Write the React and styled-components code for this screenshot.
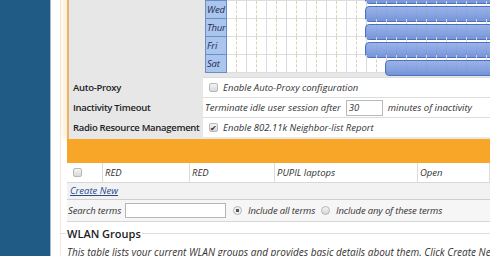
import styled, { createGlobalStyle } from "styled-components";

const GlobalStyle = createGlobalStyle`
  html, body {
    margin: 0;
    padding: 0;
    background: #fff;
  }
  body {
    font-family: "Open Sans", "Noto Sans", sans-serif;
    font-size: 9.5px;
    color: #2b2b2b;
  }
`;

const days = [
  { name: "Sun", start: 7 },
  { name: "Mon", start: 7 },
  { name: "Tue", start: 7 },
  { name: "Wed", start: 7 },
  { name: "Thur", start: 7 },
  { name: "Fri", start: 7 },
  { name: "Sat", start: 8 },
];

const hours = Array.from({ length: 15 }, (_, i) => i);

export default function App() {
  return (
    <Page>
      <GlobalStyle />
      <Sidebar />
      <Main>
        <Content>
          <SettingsTable>
            <SettingRow>
              <Label />
              <ScheduleCell>
                <Schedule>
                  {days.map((d) => (
                    <DayRow key={d.name}>
                      <DayCell>{d.name}</DayCell>
                      {hours.map((h) => (
                        <HourCell key={h} />
                      ))}
                      <Bar $start={d.start} />
                    </DayRow>
                  ))}
                </Schedule>
              </ScheduleCell>
            </SettingRow>
            <SettingRow>
              <Label>Auto-Proxy</Label>
              <Value>
                <Check />
                <span>Enable Auto-Proxy configuration</span>
              </Value>
            </SettingRow>
            <SettingRow>
              <Label>Inactivity Timeout</Label>
              <Value>
                <span>Terminate idle user session after</span>
                <SmallInput defaultValue="30" />
                <span>minutes of inactivity</span>
              </Value>
            </SettingRow>
            <SettingRow>
              <Label>Radio Resource Management</Label>
              <Value>
                <Check $checked>✔</Check>
                <span>Enable 802.11k Neighbor-list Report</span>
              </Value>
            </SettingRow>
          </SettingsTable>

          <ListTable>
            <HeaderBar />
            <DataRow>
              <Cell $w={36}>
                <Check />
              </Cell>
              <Cell $w={87}>RED</Cell>
              <Cell $w={85}>RED</Cell>
              <Cell $w={143}>PUPIL laptops</Cell>
              <Cell>Open</Cell>
            </DataRow>
          </ListTable>

          <CreateRow>
            <CreateLink href="#">Create New</CreateLink>
          </CreateRow>

          <SearchRow>
            <span>Search terms</span>
            <SearchInput />
            <Radio $on />
            <span>Include all terms</span>
            <Radio />
            <span>Include any of these terms</span>
          </SearchRow>

          <Groups>
            <Legend>WLAN Groups</Legend>
            <Desc>
              This table lists your current WLAN groups and provides basic
              details about them. Click Create New to add a group.
            </Desc>
          </Groups>
        </Content>
      </Main>
    </Page>
  );
}

const Page = styled.div`
  display: flex;
  width: 490px;
  height: 256px;
  overflow: hidden;
`;

const Sidebar = styled.div`
  flex: none;
  width: 50px;
  background: #205b86;
  border-right: 1px solid #a6bccd;
`;

const Main = styled.div`
  flex: 1;
  min-width: 0;
  padding-left: 9px;
  overflow: hidden;
`;

const Content = styled.div`
  margin-top: -53px;
  border-left: 1px solid #f1e8da;
  padding-left: 6px;
  padding-bottom: 40px;
`;

const SettingsTable = styled.div`
  background: #e7e7e7;
  border-left: 2px solid #e8b36a;
  box-shadow: -4px 0 4px rgba(248, 200, 130, 0.3);
  padding-bottom: 2px;
`;

const SettingRow = styled.div`
  display: grid;
  grid-template-columns: 134px 1fr;
  min-height: 20px;
`;

const Label = styled.div`
  display: flex;
  align-items: center;
  padding-left: 4px;
  font-weight: 600;
  letter-spacing: -0.3px;
  color: #222;
  white-space: nowrap;
`;

const Value = styled.div`
  display: flex;
  align-items: center;
  gap: 4px;
  padding-left: 2px;
  background: #fff;
  border-top: 1px solid #dcdcdc;
  font-style: italic;
  color: #333;
  white-space: nowrap;
  overflow: hidden;
`;

const ScheduleCell = styled.div`
  padding: 0 0 4px 2px;
  overflow: hidden;
`;

const Schedule = styled.div`
  background: #fff;
`;

const DayRow = styled.div`
  position: relative;
  display: flex;
  height: 18px;
`;

const DayCell = styled.div`
  flex: none;
  box-sizing: border-box;
  width: 22px;
  padding-left: 1px;
  background: #abc6ee;
  border: 1px solid #6c8cc2;
  border-top: none;
  font-style: italic;
  letter-spacing: -0.2px;
  color: #1d2b50;
  line-height: 17px;
`;

const HourCell = styled.div`
  position: relative;
  flex: none;
  box-sizing: border-box;
  width: 20px;
  border-right: 1px solid #dadada;
  border-bottom: 1px solid #dedede;
  &::before {
    content: "";
    position: absolute;
    top: 0;
    bottom: 0;
    left: 9px;
    border-left: 1px dashed #dcd4b8;
  }
`;

const Bar = styled.div`
  position: absolute;
  top: 5px;
  left: ${(p) => 22 + p.$start * 20 - 2}px;
  right: -20px;
  height: 16px;
  box-sizing: border-box;
  border: 1px solid #4d71c0;
  border-radius: 4px;
  background: linear-gradient(
    rgba(140, 168, 228, 0.88),
    rgba(100, 136, 214, 0.88)
  );
`;

const Check = styled.span`
  flex: none;
  display: inline-flex;
  align-items: center;
  justify-content: center;
  box-sizing: border-box;
  width: 9px;
  height: 9px;
  margin: 0 1px 0 4px;
  border: 1px solid #b8b8b8;
  border-radius: 2px;
  background: linear-gradient(#f4f4f4, #d8d8d8);
  font-size: 8px;
  font-style: normal;
  color: #333;
`;

const SmallInput = styled.input`
  box-sizing: border-box;
  width: 37px;
  height: 16px;
  margin: 0 1px;
  padding: 0 2px;
  border: 1px solid #b9b9b9;
  font: italic 9.5px "Open Sans", sans-serif;
  color: #333;
`;

const ListTable = styled.div`
  background: #fff;
`;

const HeaderBar = styled.div`
  height: 24px;
  background: #f8a628;
`;

const DataRow = styled.div`
  display: flex;
  height: 19px;
  border-bottom: 1px solid #d8d8d8;
  font-style: italic;
  color: #333;
`;

const Cell = styled.div`
  display: flex;
  align-items: center;
  box-sizing: border-box;
  flex: ${(p) => (p.$w ? `0 0 ${p.$w}px` : "1")};
  padding-left: 2px;
  border-right: 1px solid #dcdcdc;
  white-space: nowrap;
`;

const CreateRow = styled.div`
  height: 16px;
  padding-left: 3px;
  background: #f2f2f2;
  border-bottom: 1px solid #cfcfcf;
  line-height: 16px;
`;

const CreateLink = styled.a`
  font-style: italic;
  color: #264b8c;
  text-decoration: underline;
`;

const SearchRow = styled.div`
  display: flex;
  align-items: center;
  gap: 4px;
  height: 21px;
  padding-left: 1px;
  background: #f6f6f6;
  border-bottom: 1px solid #d6d6d6;
  font-style: italic;
  letter-spacing: -0.15px;
  color: #333;
  white-space: nowrap;
`;

const SearchInput = styled.input`
  box-sizing: border-box;
  width: 101px;
  height: 15px;
  margin: 0 1px 0 0;
  border: 1px solid #b5b5b5;
`;

const Radio = styled.span`
  flex: none;
  box-sizing: border-box;
  width: 9px;
  height: 9px;
  margin: 0 2px;
  border: 1px solid #b5b5b5;
  border-radius: 50%;
  background: ${(p) =>
    p.$on
      ? "radial-gradient(circle, #555 0 1.5px, #eee 2px)"
      : "linear-gradient(#f4f4f4, #d6d6d6)"};
`;

const Groups = styled.div`
  margin: 11px 0 0 -7px;
  border-top: 1px solid #dedede;
`;

const Legend = styled.div`
  display: inline-block;
  margin: -7px 0 0 6px;
  padding: 0 1px;
  background: #fff;
  font-size: 11px;
  font-weight: 600;
  color: #222;
  line-height: 13px;
  vertical-align: top;
`;

const Desc = styled.p`
  margin: -2px 0 0 7px;
  font-size: 10px;
  font-style: italic;
  color: #333;
  white-space: nowrap;
`;
